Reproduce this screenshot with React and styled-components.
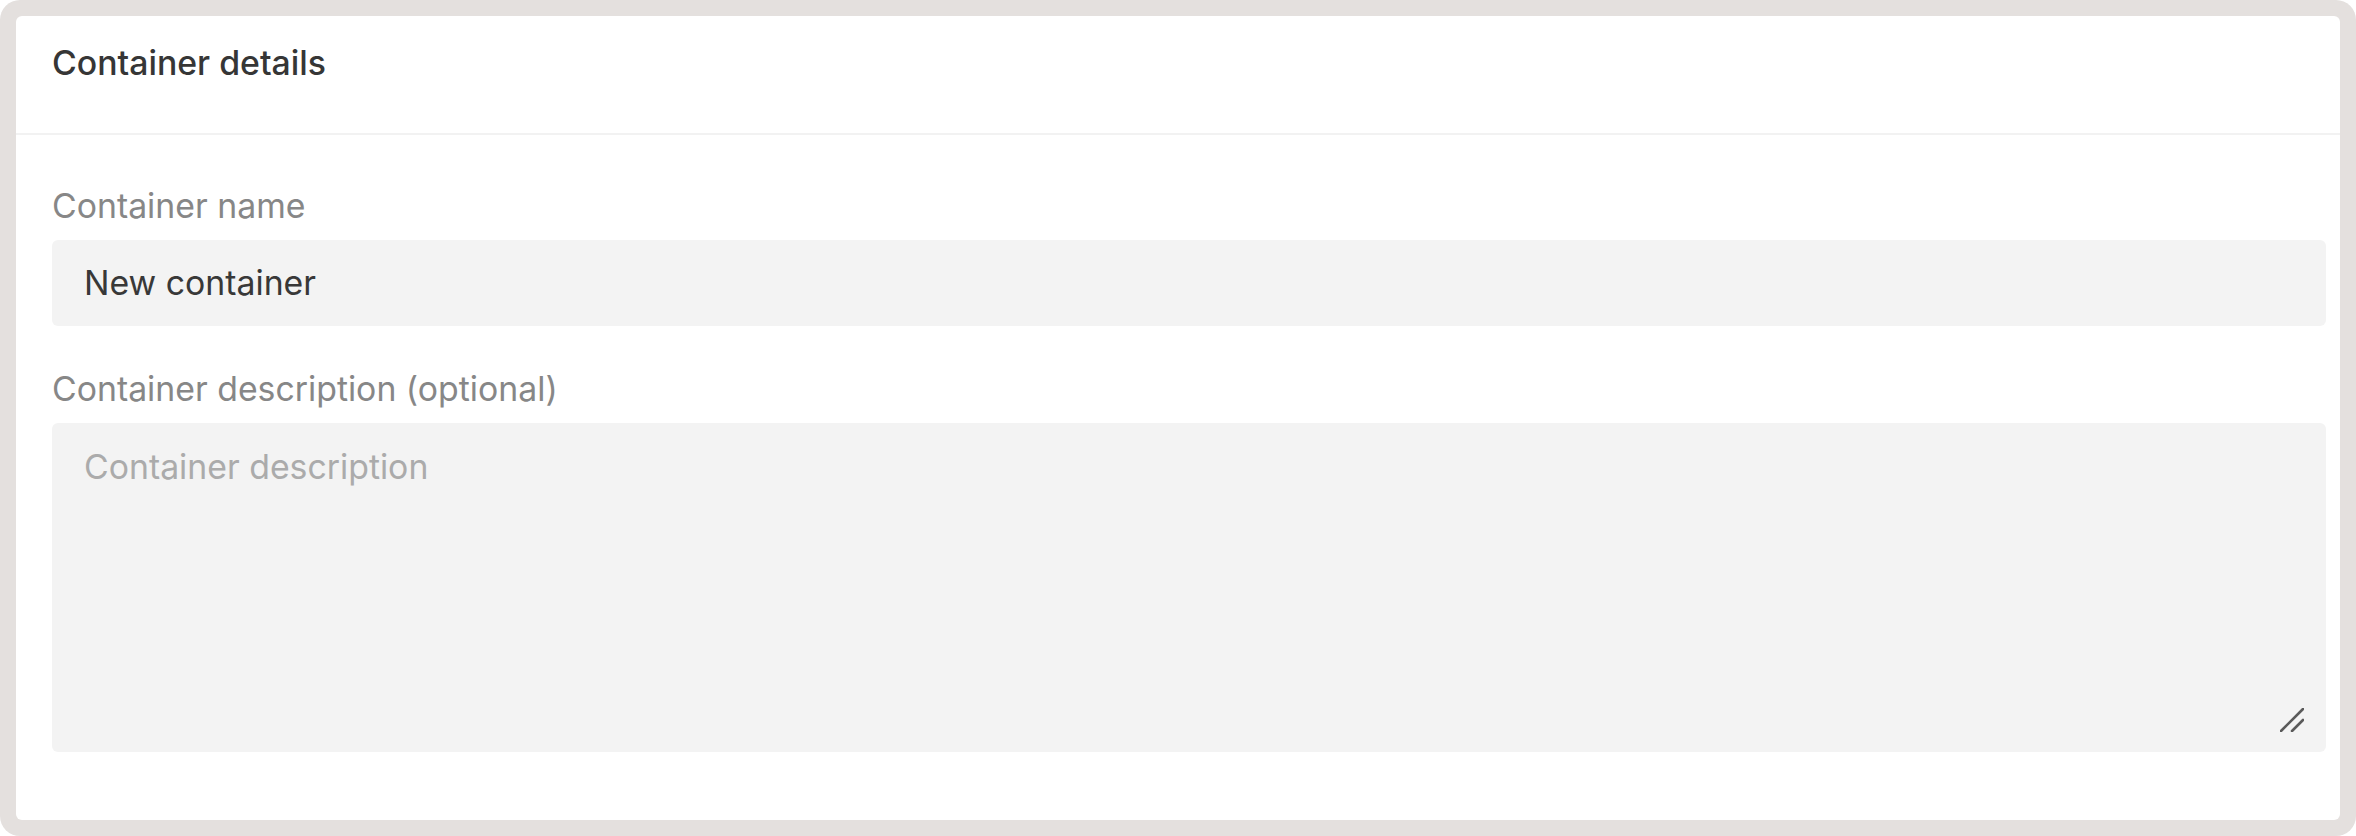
import React from 'react';
import styled, { createGlobalStyle } from 'styled-components';

const GlobalStyle = createGlobalStyle`
  html, body {
    margin: 0;
    padding: 0;
    background: #ffffff;
  }
  body {
    font-family: Inter, "Noto Sans", "Liberation Sans", sans-serif;
  }
  * {
    box-sizing: border-box;
  }
`;

const Frame = styled.div`
  width: 100%;
  height: 100vh;
  padding: 16px;
  background: #e4e0de;
  border-radius: 20px;
`;

const Card = styled.section`
  height: 100%;
  background: #ffffff;
  border-radius: 6px;
  display: flex;
  flex-direction: column;
`;

const Header = styled.header`
  padding: 23px 14px 46px 36px;
  border-bottom: 2px solid #f2f2f2;
`;

const Title = styled.h2`
  margin: 0;
  font-size: 33.8px;
  line-height: 48px;
  font-weight: 500;
  color: #363636;
`;

const Body = styled.div`
  padding: 47px 14px 0 36px;
  display: flex;
  flex-direction: column;
  gap: 39px;
`;

const Field = styled.label`
  display: flex;
  flex-direction: column;
  gap: 10px;
`;

const Label = styled.span`
  font-size: 33.8px;
  line-height: 48px;
  color: #878787;
`;

const fieldBase = `
  width: 100%;
  border: none;
  outline: none;
  border-radius: 6px;
  background: #f3f3f3;
  font-family: Inter, "Noto Sans", "Liberation Sans", sans-serif;
  font-size: 33.8px;
  color: #383838;
  padding: 0 32px;
  &::placeholder {
    color: #ababab;
  }
`;

const TextInput = styled.input`
  ${fieldBase}
  height: 86px;
  line-height: 86px;
`;

const AreaWrap = styled.div`
  position: relative;
  height: 329px;
`;

const TextArea = styled.textarea`
  ${fieldBase}
  display: block;
  height: 100%;
  padding-top: 20px;
  line-height: 48px;
  resize: none;
`;

const Grip = styled.svg`
  position: absolute;
  right: 22px;
  bottom: 20px;
  width: 24px;
  height: 24px;
  pointer-events: none;
`;

const ResizeGrip = () => (
  <Grip viewBox="0 0 24 24" aria-hidden="true">
    <path
      d="M1 23 L23 1 M12 23 L23 12"
      stroke="#5a5a5a"
      strokeWidth="2.6"
      strokeLinecap="round"
      fill="none"
    />
  </Grip>
);

const App = () => {
  return (
    <>
      <GlobalStyle />
      <Frame>
        <Card>
          <Header>
            <Title>Container details</Title>
          </Header>
          <Body>
            <Field>
              <Label>Container name</Label>
              <TextInput type="text" defaultValue="New container" />
            </Field>
            <Field>
              <Label>Container description (optional)</Label>
              <AreaWrap>
                <TextArea placeholder="Container description" />
                <ResizeGrip />
              </AreaWrap>
            </Field>
          </Body>
        </Card>
      </Frame>
    </>
  );
};

export default App;
